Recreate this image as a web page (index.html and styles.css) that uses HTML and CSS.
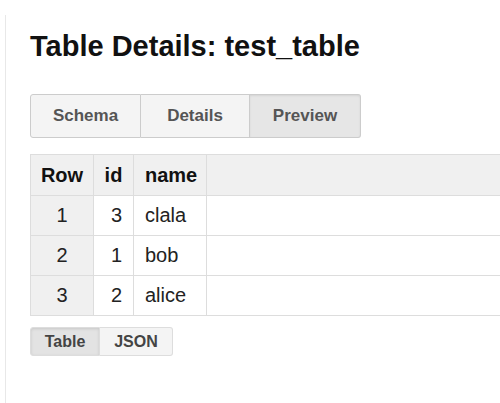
FILE: index.html
```html
<!DOCTYPE html>
<html>
<head>
<meta charset="utf-8">
<link rel="stylesheet" href="styles.css">
</head>
<body>
<div class="panel">
  <h1 class="title">Table Details: test_table</h1>
  <div class="tabs">
    <button class="tab">Schema</button>
    <button class="tab">Details</button>
    <button class="tab active">Preview</button>
  </div>
  <table class="grid">
    <thead>
      <tr><th class="rownum">Row</th><th class="idcol">id</th><th class="namecol">name</th><th class="fill"></th></tr>
    </thead>
    <tbody>
      <tr><td class="rownum">1</td><td class="num">3</td><td>clala</td><td class="fill"></td></tr>
      <tr><td class="rownum">2</td><td class="num">1</td><td>bob</td><td class="fill"></td></tr>
      <tr><td class="rownum">3</td><td class="num">2</td><td>alice</td><td class="fill"></td></tr>
    </tbody>
  </table>
  <div class="toggle">
    <button class="tbtn active">Table</button>
    <button class="tbtn">JSON</button>
  </div>
</div>
</body>
</html>
```
FILE: styles.css
```css
html, body {
  margin: 0;
  padding: 0;
  background: #fff;
  overflow: hidden;
}
body {
  font-family: "Liberation Sans", Arial, sans-serif;
  color: #222;
  width: 500px;
  height: 403px;
}
.panel {
  margin: 15px 0 0 5px;
  border-left: 1px solid #e8e8e8;
  padding-left: 24px;
  height: 388px;
  width: 520px;
}
.title {
  margin: 0;
  padding-top: 16px;
  font-size: 29px;
  font-weight: bold;
  color: #111;
  line-height: 30px;
}
.tabs {
  display: flex;
  margin-top: 33px;
}
.tab {
  font-family: inherit;
  font-size: 17px;
  font-weight: bold;
  color: #555;
  background: #f4f4f4;
  border: 1px solid #ccc;
  height: 44px;
  padding: 0;
  margin: 0;
}
.tab:nth-child(1) { width: 111px; border-radius: 3px 0 0 3px; }
.tab:nth-child(2) { width: 109px; border-left: none; }
.tab:nth-child(3) { width: 111px; border-left: none; border-radius: 0 3px 3px 0; }
.tab.active {
  background: #e6e6e6;
  box-shadow: inset 0 1px 2px rgba(0,0,0,0.08);
}
.grid {
  margin-top: 16px;
  border-collapse: collapse;
  font-size: 20px;
  width: 470px;
  table-layout: fixed;
}
.grid th, .grid td {
  border: 1px solid #ddd;
  height: 39px;
  padding: 0 11px;
  text-align: left;
  white-space: nowrap;
}
.grid thead th { height: 40px; }
.grid th {
  background: #f0f0f0;
  font-weight: bold;
  color: #111;
}
.grid td.rownum {
  background: #f0f0f0;
  text-align: center;
}
.grid th.rownum { width: 62px; padding: 0; text-align: center; }
.grid th.idcol { width: 39px; padding: 0; text-align: center; }
.grid th.namecol { width: 73px; padding: 0 11px; box-sizing: border-box; }
.grid td.num { text-align: right; padding-right: 11px; }
.grid .fill { width: auto; border-right: none; }
.toggle {
  display: flex;
  margin-top: 11px;
}
.tbtn {
  font-family: inherit;
  font-size: 16px;
  font-weight: bold;
  color: #444;
  background: #f4f4f4;
  border: 1px solid #ddd;
  height: 29px;
  padding: 0;
  margin: 0;
}
.tbtn:nth-child(1) { width: 70px; border-radius: 3px 0 0 3px; }
.tbtn:nth-child(2) { width: 73px; border-left: none; border-radius: 0 3px 3px 0; }
.tbtn.active {
  background: #e3e3e3;
  box-shadow: inset 0 1px 3px rgba(0,0,0,0.12);
}
```
